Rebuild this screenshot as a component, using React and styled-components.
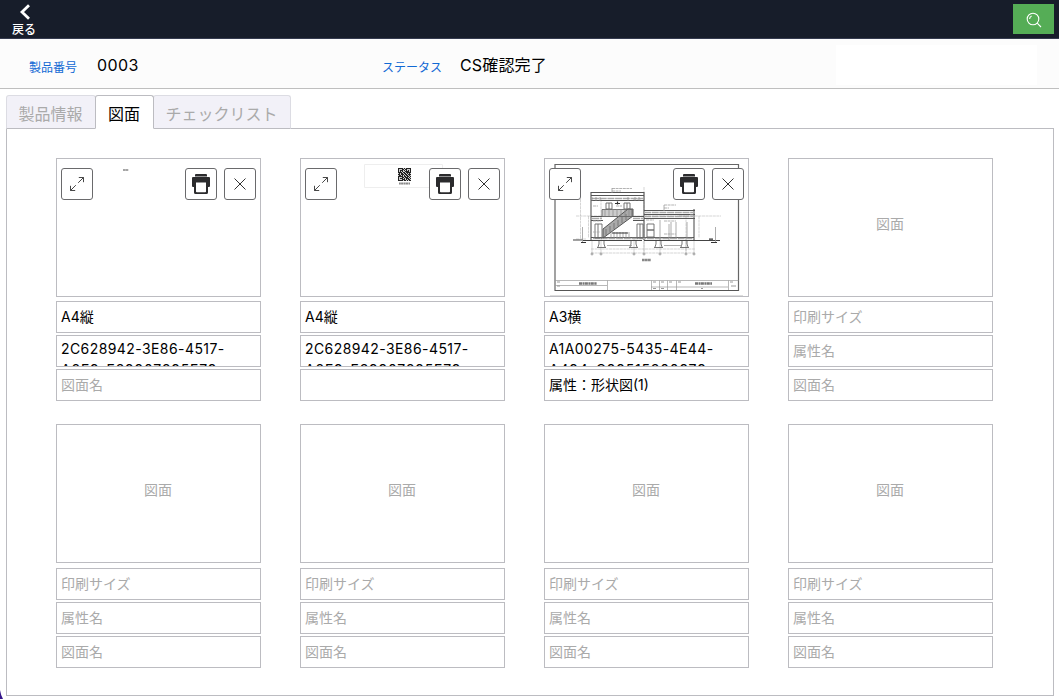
import React from "react";
import styled, { createGlobalStyle, css } from "styled-components";

const Global = createGlobalStyle`
  * { box-sizing: border-box; }
  html, body { margin: 0; background: #fff; overflow: hidden; }
  body { font-family: Inter, "Noto Sans CJK JP", sans-serif; font-size: 14px; color: #000; }
`;

const Page = styled.div`
  position: relative;
  width: 100%;
  height: 699px;
  display: flex;
  flex-direction: column;
  overflow: hidden;
`;

const TopBar = styled.header`
  flex: none;
  height: 39px;
  display: flex;
  justify-content: space-between;
  align-items: flex-start;
  padding: 4px 5px 0 11px;
  background: #171d2a;
  border-bottom: 1px solid #353b4f;
`;

const BackButton = styled.button`
  display: flex;
  flex-direction: column;
  align-items: center;
  width: 26px;
  padding: 0;
  border: 0;
  background: none;
  color: #fff;
  font: 500 12px/17px "Noto Sans CJK JP", sans-serif;
  white-space: nowrap;
  svg { display: block; margin: 0 0 0 2px; }
`;

const SearchButton = styled.button`
  display: flex;
  align-items: center;
  justify-content: center;
  width: 41px;
  height: 30px;
  padding: 2px 0 0 1px;
  border: 0;
  background: #55ad56;
`;

const InfoBar = styled.section`
  flex: none;
  height: 50px;
  display: flex;
  align-items: center;
  padding: 4px 22px 0 29px;
  background: #fcfcfc;
  border-bottom: 1px solid #bfbfbf;
`;

const InfoItem = styled.div`
  display: flex;
  align-items: center;
  width: ${(p) => p.$width}px;
`;

const InfoLabel = styled.span`
  width: ${(p) => p.$width}px;
  padding-top: 4px;
  color: #1169d4;
  font-size: 12px;
  line-height: 20px;
  white-space: nowrap;
`;

const InfoValue = styled.span`
  padding-bottom: 1px;
  font-size: 16px;
  line-height: 24px;
  letter-spacing: ${(p) => p.$spacing || 0}px;
  white-space: nowrap;
`;

const BlankNote = styled.div`
  width: 201px;
  height: 40px;
  margin: -2px 0 0 auto;
  background: #fff;
`;

const Tabs = styled.nav`
  flex: none;
  display: flex;
  height: 34px;
  margin: 6px 0 -1px 6px;
  position: relative;
`;

const Tab = styled.button`
  width: ${(p) => p.$width}px;
  padding: 3px 1px 0 0;
  border: 1px solid #dcdce3;
  border-bottom-color: #bcbcc1;
  border-radius: 3px 3px 0 0;
  background: #f2f1f8;
  color: #aaa;
  font: 400 16px/28px Inter, "Noto Sans CJK JP", sans-serif;
  white-space: nowrap;
  & + & { margin-left: -1px; }
  ${(p) =>
    p.$active &&
    css`
      z-index: 1;
      background: #fff;
      color: #000;
      border-color: #bcbcc1;
      border-bottom-color: #fff;
    `}
`;

const Panel = styled.main`
  flex: none;
  height: 568px;
  margin: 0 5px 0 6px;
  padding: 29px 0 0 49px;
  border: 1px solid #bcbcc1;
`;

const CardGrid = styled.div`
  display: grid;
  grid-template-columns: repeat(4, 205px);
  column-gap: 39px;
  row-gap: 23px;
`;

const Card = styled.article`
  display: flex;
  flex-direction: column;
  gap: 2px;
`;

const Thumb = styled.div`
  position: relative;
  display: flex;
  align-items: center;
  justify-content: center;
  height: 139px;
  margin-bottom: ${(p) => (p.$low ? 3 : 2)}px;
  padding: 0 1px 9px 0;
  border: 1px solid #bcbcc1;
  color: #aaa;
`;

const Artwork = styled.svg`
  position: absolute;
  inset: 0;
  width: 203px;
  height: 137px;
`;

const Actions = styled.div`
  position: absolute;
  top: 9px;
  left: 4px;
  right: 4px;
  display: flex;
  gap: 7px;
`;

const IconButton = styled.button`
  display: flex;
  align-items: center;
  justify-content: center;
  width: 32px;
  height: 32px;
  padding: 0;
  border: 1px solid #6a6a6c;
  border-radius: 3px;
  background: #fff;
  &:first-child { margin-right: auto; }
`;

const Field = styled.div`
  height: 32px;
  padding: ${(p) => (p.$wrap ? 2 : 5)}px 4px 0;
  border: 1px solid #bcbcc1;
  color: ${(p) => (p.$empty ? "#aaa" : "#000")};
  line-height: 20px;
  overflow: hidden;
`;

const Code = styled.span`
  display: block;
  font-size: 14px;
  line-height: 21px;
  letter-spacing: ${(p) => p.$spacing}px;
  white-space: nowrap;
`;

const Corner = styled.svg`
  position: absolute;
  left: 0;
  bottom: 0;
`;

const ExpandIcon = () => (
  <svg width="16" height="16" viewBox="0 0 16 16" fill="none" stroke="#333" strokeWidth="0.9">
    <path d="M9.2 6.8 14.5 1.5M9.8 1.5h4.7v4.7M6.8 9.2 1.5 14.5M1.5 9.8v4.7h4.7" />
  </svg>
);

const PrintIcon = () => (
  <svg width="18" height="20" viewBox="0 0 18 20">
    <path fill="#2b2b2d" d="M4 0h10q1 0 1 1v1.500H3V1q0-1 1-1zM1 3h16q1 0 1 1v8q0 1-1 1h-1v5.500q0 1.500-1.500 1.500h-11q-1.500 0-1.500-1.500V13H1q-1 0-1-1V4q0-1 1-1z" />
    <path fill="#fff" d="M4 8.500h10v9q0 .8-.8.8H4.800q-.8 0-.8-.8z" />
  </svg>
);

const CloseIcon = () => (
  <svg width="12" height="12" viewBox="0 0 12 12" stroke="#333" strokeWidth="1">
    <path d="M.5.5l11 11M11.500.5l-11 11" />
  </svg>
);

const SheetMark = () => (
  <Artwork viewBox="0 0 203 137">
    <path d="M66 11h5.500" stroke="#888" strokeWidth="1.700" strokeDasharray="2.500 .2" />
  </Artwork>
);

const qrCells = [
  "1111101011111", "1000110110001", "1011101010101", "1010100111101", "1111011011111",
  "0101101101010", "1101110110111", "0110101011010", "1111101101101", "1000110111010",
  "1011101011101", "1000111010110", "1111101101011",
];

const QrSheet = () => (
  <Artwork viewBox="0 0 203 137">
    <path d="M63.500 5.500h78v23h-78z" fill="none" stroke="#eee" />
    <path d="M97 9h13v13H97z" fill="#ccc" />
    <g fill="#222">
      {qrCells.flatMap((row, y) =>
        [...row].map((c, x) =>
          c === "1" ? <rect key={`${x}-${y}`} x={97 + x} y={9 + y} width="1" height="1" /> : null
        )
      )}
    </g>
    <path d="M98 24.500h11" stroke="#888" strokeWidth="1.800" strokeDasharray="1.800 .3 2.200 .4" />
  </Artwork>
);

const footings = [57, 89, 114, 140];
const axes = [47, 56, 89, 99, 115, 141, 149];

const BuildingPlan = () => (
  <Artwork viewBox="0 0 203 137" fill="none">
    <path d="M10 5.500h183.500v126H10z" stroke="#666" strokeWidth="1.200" />
    <path d="M10 121.500h183.500M62.500 121.500v10M106.500 121.500v10M114.500 121.500v10M122.500 121.500v10M131.500 121.500v10M183.500 121.500v10M10 126.500h52M106 128h77" stroke="#999" strokeWidth=".7" />
    <path d="M10 131.500h183.500" stroke="#555" />
    <path d="M5 136.500h193" stroke="#ddd" />
    <g stroke="#aaa" strokeWidth=".5">
      <path d="M35.500 40v40M31 57h145M31 80h10M43.500 57v22M46 90h104M46 94h104M154 57v22M99 28v65M56 40v20M141 57v35" strokeDasharray="3 .6" />
      {axes.map((x) => <path key={x} d={`M${x} 80v14`} />)}
    </g>
    <path d="M28 81h10M38 81.500h59M99 81.500h76" stroke="#444" strokeWidth="1.100" />
    <path d="M46 33V81M99 33V81M46 33.500h53M46 36.500h53M46 41.500h53M46 57.500h53M46 61.500h12M88 61.500h11M99 51.500h51M99 55.500h51M99 59.500h51M149 50v31M46 78.500h103" stroke="#555" strokeWidth="1.100" />
    <path d="M47 39.500h51M99 53.500h50M48 79.500h100M47 59.500h10M88 59.500h11M99 57.500h50" stroke="#aaa" strokeWidth="1.600" strokeDasharray="7 .7" />
    <path d="M57 50.500h30v7H57z" fill="#ccc" />
    <path d="M58 78v-8L83 50h5v7L58 79z" fill="#aaa" stroke="#555" />
    <path d="M61 76v-6M65 73v-6M69 70v-6M73 67v-6M77 64v-6M81 61v-6" stroke="#666" strokeWidth=".7" />
    <path d="M57 50.500h30v7H57zM61 44h6v6h-6zM64 44v6M79 44h6v6h-6zM82 44v6M50 65h7v14h-7zM53 65v14M92 65h6v14h-6zM95 65v14M102 65h7v6h-7zM102 71h7v7h-7z" stroke="#666" strokeWidth=".9" />
    <path d="M60 50v7M64 50v7M68 50v7M72 50v7M76 50v7M80 50v7M84 50v7M66 73v6M69 73v6M72 73v6M75 73v6M78 73v6M81 73v6M84 73v6M126 63v16M131 63v16M142 63v16M47 38v4M51 38v4M55 38v4M83 38v4M90 38v4M94 38v4" stroke="#888" strokeWidth=".7" />
    <path d="M67 74h16M70 44.500h5M72.500 42.500v3" stroke="#333" strokeWidth="1.200" />
    <path d="M48 47h5M48 62h8M88 40h8M119 62h12M119 75h12M101 61h8M134 57h10M145 56h4M67 29.500h20M67 32h9M119 46h12M119 49h5M71 47h6M48 73h7" stroke="#aaa" strokeWidth=".9" strokeDasharray="3 .6" />
    <path d="M67 29v5M119 46v6M124 65v16M115 61v20M37.500 68v15M170.500 68v15" stroke="#999" strokeWidth=".8" />
    <path d="M36 83.500h5M166 83.500h6M164 80.200h4" stroke="#333" strokeWidth="1.200" />
    {footings.map((x) => <path key={x} d={`M${x - 5} 88.500h9M${x - 3} 82v3l-1 3M${x + 2} 82v3l1 3`} stroke="#666" strokeWidth=".9" />)}
    <path d="M62 86.500h25M119 86.500h18" stroke="#999" strokeWidth=".8" />
    <g stroke="#888" strokeWidth=".8">
      {axes.map((x) => <circle key={x} cx={x} cy="95" r="1" />)}
    </g>
    <path d="M97 101h9" stroke="#888" strokeWidth="2.400" strokeDasharray="2.500 .3" />
    <path d="M34 124.500h18M150 124.500h17" stroke="#777" strokeWidth="2.400" strokeDasharray="3 .5 2 .4" />
    <path d="M108 123h3M116 123h3M124 123h3M133 123h3M185 123h3M186 127h5M108 129.500h3M116 129.500h3M156 129.500h2M12 123h3M12 127h3" stroke="#999" />
  </Artwork>
);

const firstCode = ["2C628942-3E86-4517-", "A8F9-F39907295F79"];
const codeSpacing = [0.42, 0.78];
const cards = [
  { art: <SheetMark />, size: "A4縦", code: firstCode },
  { art: <QrSheet />, size: "A4縦", code: firstCode, name: " " },
  { art: <BuildingPlan />, size: "A3横", code: ["A1A00275-5435-4E44-", "A494-C99515300979"], name: "属性：形状図(1)" },
  {}, {}, {}, {}, {},
];

function DrawingCard({ art, size, code, name, low }) {
  return (
    <Card>
      <Thumb $low={low}>
        {art || "図面"}
        {art && (
          <Actions>
            <IconButton aria-label="拡大"><ExpandIcon /></IconButton>
            <IconButton aria-label="印刷"><PrintIcon /></IconButton>
            <IconButton aria-label="削除"><CloseIcon /></IconButton>
          </Actions>
        )}
      </Thumb>
      <Field $empty={!size}>{size || "印刷サイズ"}</Field>
      <Field $empty={!code} $wrap={!!code}>
        {code ? code.map((line, i) => <Code key={line} $spacing={codeSpacing[i]}>{line}</Code>) : "属性名"}
      </Field>
      <Field $empty={!name}>{name || "図面名"}</Field>
    </Card>
  );
}

export default function App() {
  return (
    <Page>
      <Global />
      <TopBar>
        <BackButton>
          <svg width="12" height="16" viewBox="0 0 12 16" fill="none" stroke="#fff" strokeWidth="2.800">
            <path d="M10 1.200 3 8l7 6.800" />
          </svg>
          戻る
        </BackButton>
        <SearchButton aria-label="検索">
          <svg width="16" height="16" viewBox="0 0 16 16" fill="none" stroke="#fff" strokeWidth="1.100">
            <circle cx="7" cy="7" r="5.800" />
            <path d="m11.200 11.200 3.800 3.800M3.600 7a3.400 3.400 0 0 1 2-3.100" />
          </svg>
        </SearchButton>
      </TopBar>
      <InfoBar>
        <InfoItem $width={353}>
          <InfoLabel $width={68}>製品番号</InfoLabel>
          <InfoValue $spacing={0.4}>0003</InfoValue>
        </InfoItem>
        <InfoItem $width={300}>
          <InfoLabel $width={78}>ステータス</InfoLabel>
          <InfoValue $spacing={0.15}>CS確認完了</InfoValue>
        </InfoItem>
        <BlankNote />
      </InfoBar>
      <Tabs>
        <Tab $width={90}>製品情報</Tab>
        <Tab $width={59} $active>図面</Tab>
        <Tab $width={138}>チェックリスト</Tab>
      </Tabs>
      <Panel>
        <CardGrid>
          {cards.map((card, i) => <DrawingCard key={i} {...card} low={i > 3} />)}
        </CardGrid>
      </Panel>
      <Corner width="3" height="9" viewBox="0 0 3 9">
        <path d="M0 0Q1 6 3 9H0z" fill="#35158a" />
      </Corner>
    </Page>
  );
}
